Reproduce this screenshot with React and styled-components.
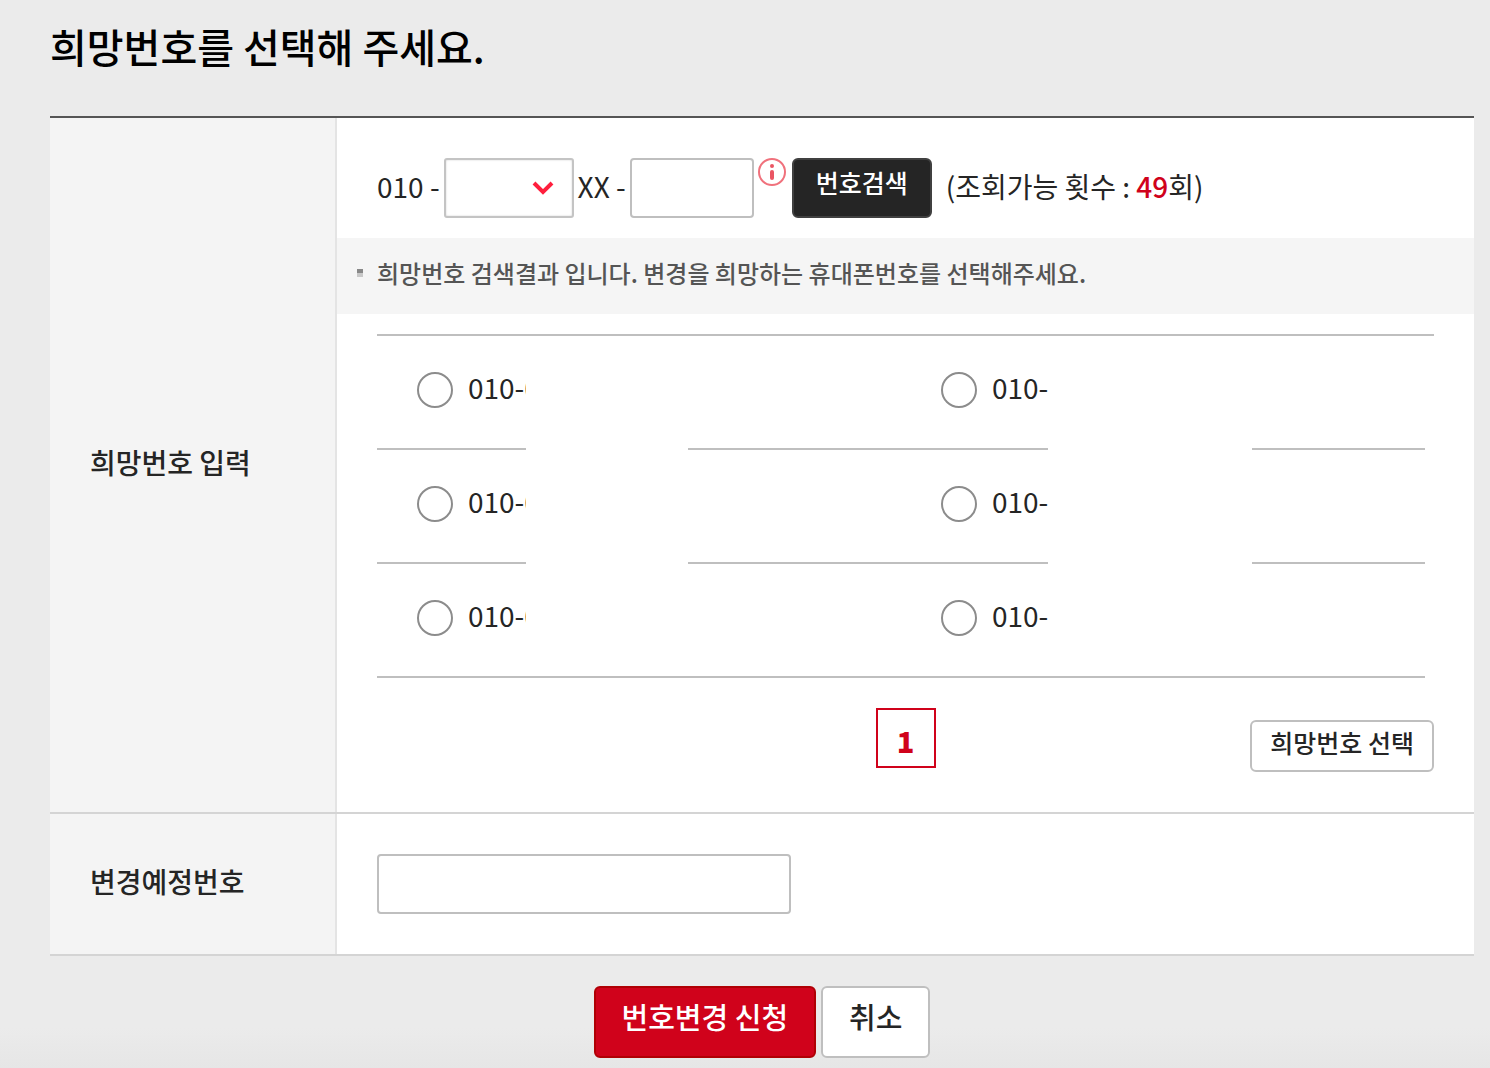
import React from "react";
import styled, { createGlobalStyle } from "styled-components";

const GlobalStyle = createGlobalStyle`
  *, *::before, *::after { box-sizing: border-box; }
  body {
    margin: 0;
    background: #ebebeb;
    color: #252525;
    font-family: "Noto Sans CJK KR", sans-serif;
    font-size: 28px;
    font-weight: 500;
    line-height: 40px;
  }
  button, input, select { font: inherit; color: inherit; }
`;

const Page = styled.main`
  display: flex;
  flex-direction: column;
  min-height: 100vh;
  padding: 16px 16px 10px 50px;
  background: linear-gradient(to top, #e6e6e6, #ebebeb 40px);
`;

const Title = styled.h1`
  margin: 0 0 40px;
  color: #000;
  font-size: 40px;
  font-weight: 500;
  line-height: 60px;
`;

const FormTable = styled.div`
  border-top: 2px solid #555;
`;

const FormRow = styled.div`
  display: grid;
  grid-template-columns: 287px minmax(0, 1fr);
  border-bottom: 2px solid #d4d4d4;
`;

const HeadCell = styled.div`
  display: flex;
  align-items: center;
  padding: 0 40px 6px;
  border-right: 2px solid #e4e4e4;
  background: #f4f4f4;
`;

const BodyCell = styled.div`
  padding: ${(p) => (p.$compact ? "40px" : "40px 0")};
  background: #fff;
`;

const SearchBar = styled.div`
  display: flex;
  align-items: center;
  gap: 4px;
  padding: 0 40px 20px;
  white-space: nowrap;
`;

const Text = styled.span`
  padding-bottom: 4px;
  font-weight: 400;
`;

const SelectWrap = styled.span`
  position: relative;
  display: flex;
`;

const Select = styled.select`
  width: 130px;
  height: 60px;
  padding: 0 40px 0 12px;
  border: 2px solid #c4c4c4;
  border-radius: 3px;
  background: #fff;
  box-shadow: inset 0 0 2px #ccc;
  appearance: none;
`;

const Chevron = styled.svg`
  position: absolute;
  top: 22px;
  right: 20px;
  pointer-events: none;
`;

const TextInput = styled.input`
  width: ${(p) => p.$width};
  max-width: 100%;
  height: 60px;
  display: block;
  padding: 0 14px;
  border: 2px solid #bfbfbf;
  border-radius: 4px;
  background: #fff;
`;

const InfoButton = styled.button`
  align-self: flex-start;
  display: flex;
  padding: 0 2px 0 0;
  border: 0;
  background: none;
`;

const tones = {
  dark: ["#252525", "#404040", "#fff"],
  red: ["#d0021b", "#b00005", "#fff"],
  light: ["#fff", "#bfbfbf", "#252525"],
};

const Button = styled.button`
  height: ${(p) => p.$height};
  padding: 0 ${(p) => p.$pad} ${(p) => (p.$height === "52px" ? "8px" : "12px")};
  border: 2px solid ${(p) => tones[p.$tone][1]};
  border-radius: 6px;
  background: ${(p) => tones[p.$tone][0]};
  color: ${(p) => tones[p.$tone][2]};
  font-size: ${(p) => (p.$large ? "29px" : "25px")};
  line-height: 36px;
  white-space: nowrap;
`;

const Remaining = styled.span`
  padding: 0 0 4px 10px;
  font-weight: 400;
`;

const Count = styled.strong`
  color: #d0021b;
  font-weight: 500;
`;

const Notice = styled.p`
  display: flex;
  align-items: center;
  gap: 14px;
  margin: 0;
  padding: 17px 40px 23px 20px;
  background: #f5f5f5;
  color: #555;
  font-size: 24px;
  line-height: 36px;

  &::before {
    content: "";
    width: 6px;
    height: 8px;
    background: linear-gradient(#888 4px, #c8c8c8 4px);
  }
`;

const NumberList = styled.ul`
  display: grid;
  grid-template-columns: 1fr 1fr;
  margin: 20px 40px 0;
  padding: 0 9px 0 0;
  border-top: 2px solid #bfbfbf;
  list-style: none;
`;

const NumberItem = styled.li`
  position: relative;
  display: flex;
  align-items: center;
  height: 114px;
  padding: 0 40px 6px;
  border-bottom: 2px solid #bfbfbf;
`;

const NumberLabel = styled.label`
  display: flex;
  align-items: center;
  gap: 15px;
`;

const Radio = styled.input`
  width: 36px;
  height: 36px;
  margin: 2px 0 0;
  border: 2px solid #8c8c8c;
  border-radius: 50%;
  background: #fff;
  appearance: none;

  &:checked { background: radial-gradient(#d0021b 8px, #fff 9px); }
`;

const Redaction = styled.span`
  position: absolute;
  top: 0;
  bottom: ${(p) => (p.$last ? "0" : "-2px")};
  left: ${(p) => p.$left};
  width: ${(p) => p.$width};
  background: #fff;
`;

const ListFooter = styled.div`
  display: grid;
  grid-template-columns: 1fr auto 1fr;
  align-items: end;
  padding: 30px 40px 0;
`;

const CurrentPage = styled.a`
  grid-column: 2;
  align-self: start;
  width: 60px;
  height: 60px;
  padding-top: 4px;
  border: 2px solid #d0021b;
  color: #d0021b;
  font-size: 29px;
  font-weight: 900;
  line-height: 52px;
  text-align: center;
  text-decoration: none;
`;

const FooterAction = styled.div`
  display: flex;
  justify-content: flex-end;
  padding-top: 12px;
`;

const Actions = styled.div`
  display: flex;
  justify-content: center;
  gap: 5px;
  padding-top: 30px;
`;

const numbers = ["010-0", "010-", "010-0", "010-", "010-0", "010-"];

function InfoIcon() {
  return (
    <svg width="28" height="28" viewBox="0 0 28 28" fill="none" aria-hidden="true">
      <circle cx="14" cy="14" r="13" stroke="#f0717c" strokeWidth="2" />
      <circle cx="14" cy="8" r="2" fill="#ea5563" />
      <path d="M14 14v6" stroke="#ea5563" strokeWidth="4" strokeLinecap="round" />
    </svg>
  );
}

export default function App() {
  return (
    <>
      <GlobalStyle />
      <Page>
        <Title>희망번호를 선택해 주세요.</Title>
        <FormTable>
          <FormRow>
            <HeadCell>희망번호 입력</HeadCell>
            <BodyCell>
              <SearchBar>
                <Text>010 -</Text>
                <SelectWrap>
                  <Select aria-label="가운데 번호" defaultValue="">
                    <option value="" />
                  </Select>
                  <Chevron width="22" height="16" viewBox="0 0 22 16" fill="none" aria-hidden="true">
                    <path d="M2 3l9 9 9-9" stroke="#ff1f3d" strokeWidth="4" />
                  </Chevron>
                </SelectWrap>
                <Text>XX -</Text>
                <TextInput $width="124px" aria-label="끝 번호" />
                <InfoButton type="button" aria-label="안내">
                  <InfoIcon />
                </InfoButton>
                <Button type="button" $tone="dark" $height="60px" $pad="22px">번호검색</Button>
                <Remaining>
                  (조회가능 횟수 : <Count>49</Count>회)
                </Remaining>
              </SearchBar>
              <Notice>희망번호 검색결과 입니다. 변경을 희망하는 휴대폰번호를 선택해주세요.</Notice>
              <NumberList>
                {numbers.map((number, i) => (
                  <NumberItem key={i}>
                    <NumberLabel>
                      <Radio type="radio" name="number" />
                      <Text>{number}</Text>
                    </NumberLabel>
                    <Redaction
                      $left={i % 2 ? "147px" : "149px"}
                      $width={i % 2 ? "204px" : "162px"}
                      $last={i > 3}
                    />
                  </NumberItem>
                ))}
              </NumberList>
              <ListFooter>
                <CurrentPage href="#page-1" aria-current="page">1</CurrentPage>
                <FooterAction>
                  <Button type="button" $tone="light" $height="52px" $pad="18px">희망번호 선택</Button>
                </FooterAction>
              </ListFooter>
            </BodyCell>
          </FormRow>
          <FormRow>
            <HeadCell as="label" htmlFor="new-number">변경예정번호</HeadCell>
            <BodyCell $compact>
              <TextInput id="new-number" $width="414px" />
            </BodyCell>
          </FormRow>
        </FormTable>
        <Actions>
          <Button type="submit" $tone="red" $height="72px" $pad="26px" $large>번호변경 신청</Button>
          <Button type="button" $tone="light" $height="72px" $pad="26px" $large>취소</Button>
        </Actions>
      </Page>
    </>
  );
}
